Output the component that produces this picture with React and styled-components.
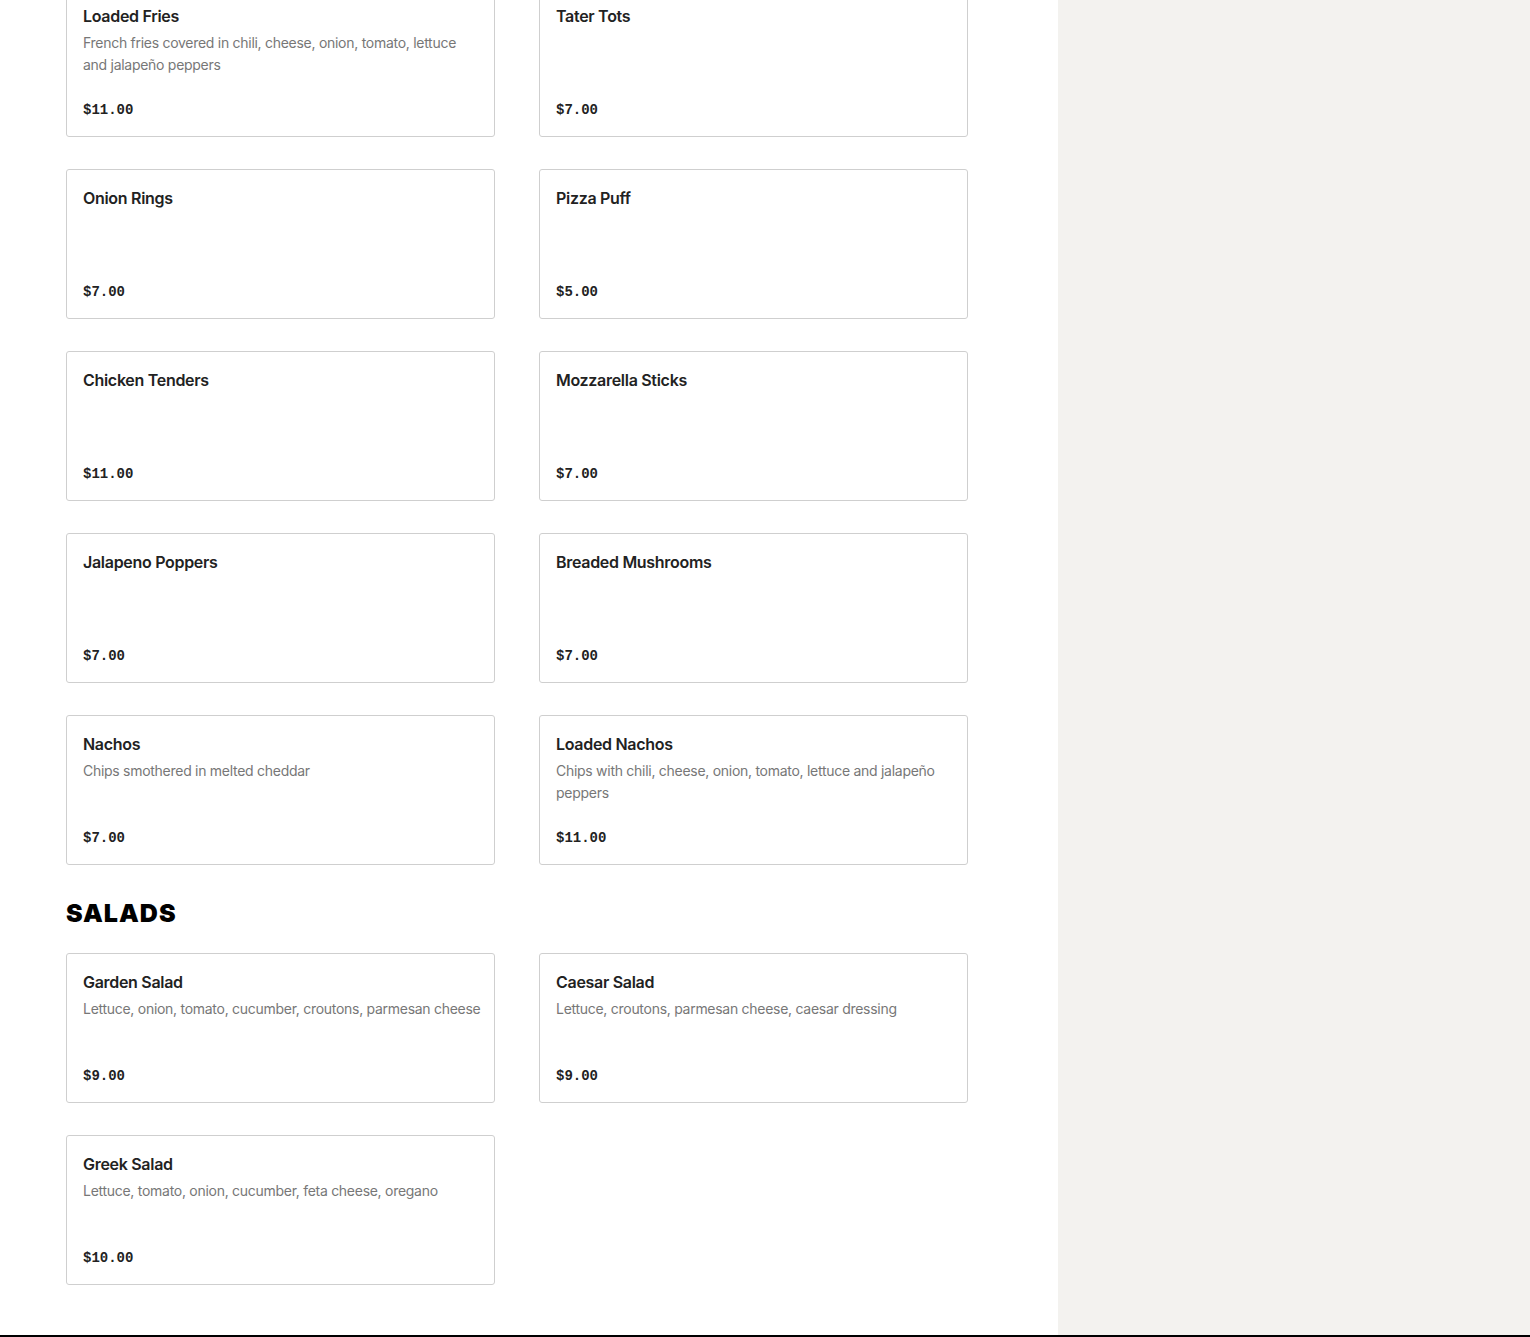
import React from 'react';
import styled, { createGlobalStyle } from 'styled-components';

const GlobalStyle = createGlobalStyle`
    html, body {
        margin: 0;
        padding: 0;
        background: #fff;
    }
    body {
        font-family: Inter, 'Liberation Sans', sans-serif;
        color: #222;
        overflow: hidden;
    }
`;

const Page = styled.div`
    display: flex;
    flex-direction: column;
    height: 1337px;
    overflow: hidden;
`;

const Body = styled.div`
    flex: 1;
    display: flex;
    min-height: 0;
`;

const Main = styled.main`
    width: 1058px;
    flex-shrink: 0;
    padding: 0 0 0 66px;
    box-sizing: border-box;
    margin-top: -13px;
`;

const Aside = styled.aside`
    flex: 1;
    background: #f3f2ef;
`;

const Footer = styled.footer`
    height: 2px;
    background: #000;
`;

const Grid = styled.div`
    display: grid;
    grid-template-columns: repeat(2, 429px);
    column-gap: 44px;
    row-gap: 32px;
`;

const SectionTitle = styled.h2`
    margin: 32px 0 24px;
    font-family: Inter, 'Liberation Sans', sans-serif;
    font-weight: 900;
    font-size: 25px;
    line-height: 32px;
    letter-spacing: 1px;
    color: #000;
    text-transform: uppercase;
`;

const Card = styled.article`
    height: 150px;
    box-sizing: border-box;
    border: 1px solid #cfcfcf;
    border-radius: 3px;
    padding: 16px 12px 16px 16px;
    display: flex;
    flex-direction: column;
    background: #fff;
`;

const Name = styled.h3`
    margin: 0;
    font-size: 16px;
    line-height: 24px;
    font-weight: 600;
    letter-spacing: -0.3px;
    color: #222;
`;

const Description = styled.p`
    margin: 4px 0 0;
    font-size: 14px;
    line-height: 22px;
    letter-spacing: -0.28px;
    color: #777;
`;

const Price = styled.span`
    margin-top: auto;
    font-family: 'Liberation Mono', 'DejaVu Sans Mono', monospace;
    font-weight: 700;
    font-size: 14px;
    line-height: 20px;
    color: #222;
`;

const appetizers = [
    { name: 'Loaded Fries', desc: 'French fries covered in chili, cheese, onion, tomato, lettuce and jalapeño peppers', price: '$11.00' },
    { name: 'Tater Tots', price: '$7.00' },
    { name: 'Onion Rings', price: '$7.00' },
    { name: 'Pizza Puff', price: '$5.00' },
    { name: 'Chicken Tenders', price: '$11.00' },
    { name: 'Mozzarella Sticks', price: '$7.00' },
    { name: 'Jalapeno Poppers', price: '$7.00' },
    { name: 'Breaded Mushrooms', price: '$7.00' },
    { name: 'Nachos', desc: 'Chips smothered in melted cheddar', price: '$7.00' },
    { name: 'Loaded Nachos', desc: 'Chips with chili, cheese, onion, tomato, lettuce and jalapeño peppers', price: '$11.00' },
];

const salads = [
    { name: 'Garden Salad', desc: 'Lettuce, onion, tomato, cucumber, croutons, parmesan cheese', price: '$9.00' },
    { name: 'Caesar Salad', desc: 'Lettuce, croutons, parmesan cheese, caesar dressing', price: '$9.00' },
    { name: 'Greek Salad', desc: 'Lettuce, tomato, onion, cucumber, feta cheese, oregano', price: '$10.00' },
];

const MenuItem = ({ name, desc, price }) => (
    <Card>
        <Name>{name}</Name>
        {desc && <Description>{desc}</Description>}
        <Price>{price}</Price>
    </Card>
);

const App = () => {
    return (
        <Page>
            <GlobalStyle />
            <Body>
                <Main>
                    <Grid>
                        {appetizers.map((item) => (
                            <MenuItem key={item.name} {...item} />
                        ))}
                    </Grid>
                    <SectionTitle>Salads</SectionTitle>
                    <Grid>
                        {salads.map((item) => (
                            <MenuItem key={item.name} {...item} />
                        ))}
                    </Grid>
                </Main>
                <Aside />
            </Body>
            <Footer />
        </Page>
    );
};

export default App;
